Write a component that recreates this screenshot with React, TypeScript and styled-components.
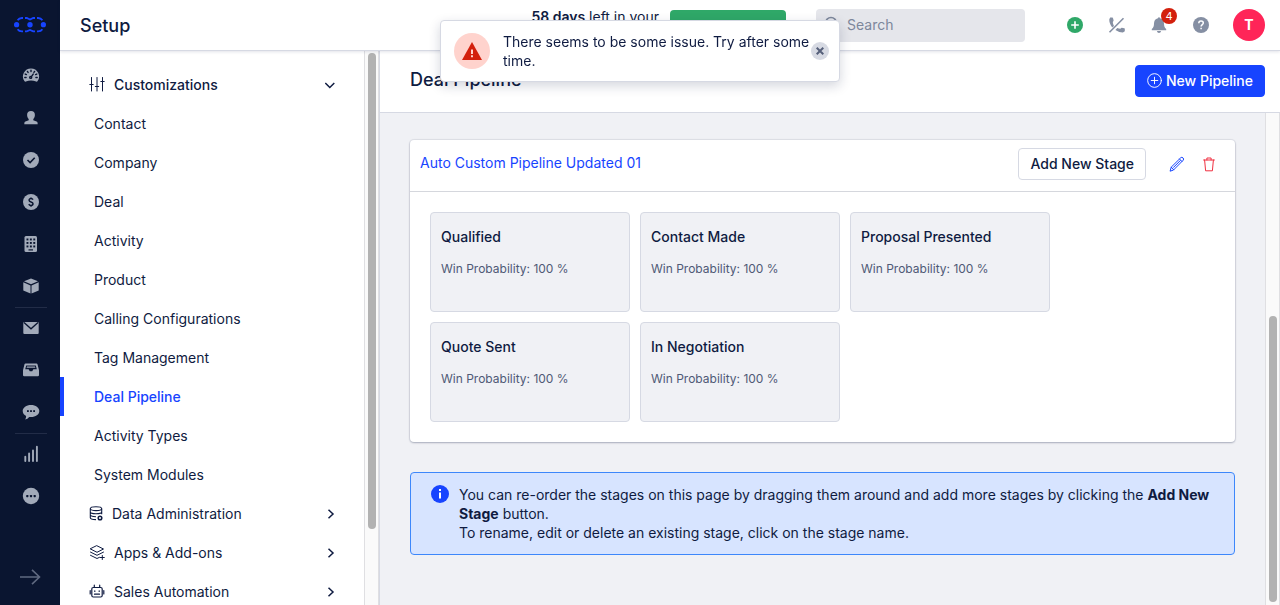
import React from "react";
import styled, { createGlobalStyle, css } from "styled-components";

const ink = "#0f1b41";
const blue = "#1744ff";
const line = "#d6d9e3";
const canvas = "#f0f1f5";

const GlobalStyle = createGlobalStyle`
  *, *::before, *::after { box-sizing: border-box; }
  body {
    margin: 0;
    background: #fff;
    color: ${ink};
    font-family: Inter, "Liberation Sans", sans-serif;
    font-size: 14px;
    line-height: 19px;
  }
  button, input { font: inherit; color: inherit; }
  button { cursor: pointer; padding: 0; border: 0; background: none; }
  a { color: inherit; text-decoration: none; }
  ul { list-style: none; margin: 0; padding: 0; }
  h1, h2, h3, p { margin: 0; }
  svg { display: block; flex: none; }
`;

const Shell = styled.div`
  display: flex;
  height: 100vh;
  overflow: hidden;
`;

const Rail = styled.nav`
  display: flex;
  flex-direction: column;
  flex: none;
  width: 60px;
  background: #0a1530;
  color: #a2aab9;
`;

const Brand = styled.a`
  display: flex;
  justify-content: center;
  padding: 16px 0 21px;
`;

const RailLink = styled.a<{ $divided?: boolean }>`
  display: flex;
  align-items: center;
  justify-content: center;
  height: 42px;
  margin: 0 13px 0 15px;
  padding-bottom: 1px;
  border-top: 1px solid ${(p) => (p.$divided ? "#222c47" : "transparent")};
`;

const RailToggle = styled.button`
  display: flex;
  justify-content: center;
  margin-top: auto;
  padding: 0 0 20px;
  color: #5f6980;
`;

const Page = styled.div`
  display: flex;
  flex-direction: column;
  flex: 1;
  min-width: 0;
`;

const TopBar = styled.header`
  position: relative;
  z-index: 1;
  display: flex;
  align-items: center;
  flex: none;
  height: 51px;
  padding: 0 15px 0 20px;
  background: #fff;
  border-bottom: 1px solid ${line};
  box-shadow: 0 1px 3px rgba(15, 27, 65, 0.12);
`;

const Title = styled.h1`
  flex: 1;
  padding-top: 2px;
  font-size: 18px;
  line-height: 24px;
  font-weight: 500;
`;

const Trial = styled.p`
  align-self: flex-start;
  padding-top: 7px;
  strong { font-weight: 600; }
`;

const UpgradeButton = styled.button`
  width: 116px;
  height: 30px;
  margin: 0 30px 0 11px;
  border-radius: 4px;
  background: #2fa868;
`;

const SearchBox = styled.label`
  display: flex;
  align-items: center;
  gap: 7px;
  width: 209px;
  height: 33px;
  margin-right: 29px;
  padding: 0 8px 2px;
  border-radius: 4px;
  background: #e5e6eb;
  color: #7d879b;
  input {
    flex: 1;
    min-width: 0;
    padding: 0;
    border: 0;
    outline: 0;
    background: none;
  }
  input::placeholder { color: #7d879b; opacity: 1; }
`;

const IconButton = styled.button<{ $tone: string; $width?: number }>`
  position: relative;
  display: flex;
  align-items: center;
  justify-content: center;
  width: ${(p) => p.$width ?? 42}px;
  height: 32px;
  color: ${(p) => p.$tone};
`;

const Badge = styled.span`
  position: absolute;
  top: -1px;
  right: 3px;
  width: 16px;
  height: 16px;
  border-radius: 50%;
  background: #d3200d;
  color: #fff;
  font-size: 11px;
  line-height: 16px;
  text-align: center;
`;

const Avatar = styled.button`
  width: 32px;
  height: 32px;
  margin-left: 11px;
  padding-bottom: 1px;
  border-radius: 50%;
  background: #ff2558;
  color: #fff;
  font-weight: 700;
`;

const Columns = styled.div`
  display: flex;
  flex: 1;
  min-height: 0;
`;

const SetupNav = styled.nav`
  flex: none;
  width: 304px;
  padding-top: 14px;
  overflow: hidden;
`;

const GroupButton = styled.button<{ $open?: boolean }>`
  display: flex;
  align-items: center;
  gap: 9px;
  width: 100%;
  height: 39px;
  padding: 0 27px 0 29px;
  text-align: left;
  font-weight: ${(p) => (p.$open ? 500 : 400)};
  span { flex: 1; }
`;

const NavLink = styled.a<{ $active?: boolean }>`
  display: block;
  height: 39px;
  padding-left: 30px;
  border-left: 4px solid transparent;
  line-height: 39px;
  ${(p) =>
    p.$active &&
    css`
      border-color: ${blue};
      color: ${blue};
      font-weight: 500;
    `}
`;

const Track = styled.div`
  display: flex;
  flex-direction: column;
  flex: none;
  width: 15px;
  padding: 2px 2px 2px 3px;
  border: solid #dfdfe2;
  border-width: 0 1px;
  background: #fafafa;
`;

const Thumb = styled.div<{ $before: number; $size: number; $after: number }>`
  display: flex;
  flex-direction: column;
  flex: 1;
  width: 8px;
  &::before { content: ""; flex: ${(p) => p.$before}; }
  &::after { content: ""; flex: ${(p) => p.$after}; }
  span {
    flex: ${(p) => p.$size};
    border-radius: 4px;
    background: #b2b2b2;
  }
`;

const Main = styled.main`
  display: flex;
  flex-direction: column;
  flex: 1;
  min-width: 0;
  border-left: 1px solid ${line};
`;

const MainHead = styled.div`
  display: flex;
  align-items: center;
  justify-content: space-between;
  height: 62px;
  padding: 0 15px 2px 30px;
  border-bottom: 1px solid ${line};
`;

const SectionTitle = styled.h2`
  padding-bottom: 2px;
  font-size: 18px;
  line-height: 24px;
  font-weight: 500;
`;

const Button = styled.button<{ $primary?: boolean }>`
  display: flex;
  align-items: center;
  justify-content: center;
  gap: 4px;
  height: 32px;
  padding: 0 11px;
  border: 1px solid ${(p) => (p.$primary ? blue : line)};
  border-radius: 4px;
  background: ${(p) => (p.$primary ? blue : "#fff")};
  color: ${(p) => (p.$primary ? "#fff" : ink)};
  font-weight: 500;
`;

const ScrollArea = styled.div`
  display: flex;
  flex: 1;
  min-height: 0;
  background: ${canvas};
`;

const Content = styled.div`
  flex: 1;
  min-width: 0;
  padding: 27px 30px 0;
  overflow: hidden;
`;

const Card = styled.section`
  border-radius: 4px;
  background: #fff;
  box-shadow: 0 0 1px 1px rgba(15, 27, 65, 0.08), 0 1px 2px rgba(15, 27, 65, 0.25);
`;

const CardHead = styled.div`
  display: flex;
  align-items: center;
  height: 52px;
  padding: 0 10px;
  border-bottom: 1px solid #d5d7dd;
`;

const PipelineName = styled.h3`
  flex: 1;
  padding-bottom: 6px;
  color: ${blue};
  font-size: 14px;
  font-weight: 400;
`;

const CardActions = styled.div`
  display: flex;
  align-items: center;
  padding-bottom: 3px;
  button:first-child {
    margin-right: 15px;
    padding-bottom: 2px;
  }
`;

const Stages = styled.ul`
  display: flex;
  flex-wrap: wrap;
  gap: 10px;
  padding: 20px;
`;

const Stage = styled.li`
  width: 200px;
  height: 100px;
  padding: 14px 10px;
  border: 1px solid ${line};
  border-radius: 4px;
  background: ${canvas};
`;

const StageName = styled.p`
  font-weight: 500;
`;

const StageMeta = styled.p`
  padding-top: 13px;
  color: #4f5975;
  font-size: 12px;
`;

const Note = styled.aside`
  display: flex;
  gap: 10px;
  margin-top: 30px;
  padding: 12px 20px;
  border: 1px solid #3d87fb;
  border-radius: 4px;
  background: #d7e4ff;
  p { flex: 1; }
`;

const Toast = styled.div`
  position: fixed;
  z-index: 2;
  top: 20px;
  left: 50%;
  display: flex;
  align-items: center;
  width: 400px;
  padding: 11px 10px 11px 13px;
  border: 1px solid ${line};
  border-radius: 4px;
  background: #fff;
  box-shadow: 0 4px 12px rgba(15, 27, 65, 0.18);
  transform: translateX(-50%);
  p { flex: 1; padding-left: 13px; }
`;

const ToastIcon = styled.span`
  display: flex;
  align-items: center;
  justify-content: center;
  width: 36px;
  height: 36px;
  border-radius: 50%;
  background: #ffd3cd;
`;

const CloseButton = styled.button`
  display: flex;
  align-items: center;
  justify-content: center;
  width: 18px;
  height: 18px;
  border-radius: 50%;
  background: #d7dae3;
  color: #56607a;
`;

const Solid = ({ children }: { children: React.ReactNode }) => (
  <svg width="18" height="18" viewBox="0 0 18 18" fill="currentColor" aria-hidden="true">{children}</svg>
);

const Outline = ({ children, size = 16, weight = 1 }: { children: React.ReactNode; size?: number; weight?: number }) => (
  <svg width={size} height={size} viewBox="0 0 16 16" fill="none" stroke="currentColor" strokeWidth={weight} strokeLinecap="round" strokeLinejoin="round" aria-hidden="true">{children}</svg>
);

const dark = "#0a1530";

const railItems: { label: string; divided?: boolean; icon: React.ReactNode }[] = [
  {
    label: "Dashboard",
    icon: (
      <Solid>
        <path d="M9 1.500a8 8 0 0 0-6.600 12.600q.6.9 1.500.5Q9 12.200 14.100 14.600q.9.4 1.500-.5A8 8 0 0 0 9 1.500z" />
        <g stroke={dark} strokeWidth="1.400" strokeLinecap="round" fill="none">
          <path d="M9 3.200v1.300M5.400 4.400l.7 1M12.600 4.400l-.7 1M3.200 7.100l1.200.5M14.800 7.100l-1.200.5M2.800 10.500h1.300M13.900 10.500h1.300M9.200 9.800l2-2.700" />
          <circle cx="8.700" cy="10.400" r="1" />
        </g>
      </Solid>
    ),
  },
  {
    label: "Contacts",
    icon: (
      <Solid>
        <path d="M9 2C6.500 2 5 3.600 5.100 6c.1 1.900.6 3 1.600 4.100v1.100L3.500 12.500C2.600 12.900 2.300 13.500 2.300 15.300h13.400c0-1.800-.3-2.400-1.200-2.800l-3.200-1.300v-1.100c1-1.100 1.500-2.200 1.600-4.100C13 3.600 11.500 2 9 2z" />
      </Solid>
    ),
  },
  {
    label: "Tasks",
    icon: (
      <Solid>
        <circle cx="9" cy="9" r="8" />
        <path d="M5.500 9l2.600 2.600 4.600-4.800" fill="none" stroke={dark} strokeWidth="1.600" />
      </Solid>
    ),
  },
  {
    label: "Deals",
    icon: (
      <Solid>
        <circle cx="9" cy="9" r="8" />
        <path d="M11 6.700C10.600 5.900 10 5.600 9 5.600c-1.200 0-1.900.6-1.900 1.600C7.100 9.500 11 8.400 11 10.800c0 1-.8 1.600-2 1.600-1.100 0-1.800-.4-2.200-1.300M9 4.400v1.200M9 12.400v1.300" fill="none" stroke={dark} strokeWidth="1.500" />
      </Solid>
    ),
  },
  {
    label: "Companies",
    icon: (
      <Solid>
        <rect x="2.500" y="1" width="12.500" height="16" rx="1.500" />
        <g fill={dark}>
          {[4, 7.5, 11].map((y) => [4.5, 7.9, 11.3].map((x) => <rect key={`${x}-${y}`} x={x} y={y - 0.5} width="1.900" height="1.900" />))}
          <rect x="6.500" y="14.300" width="4.500" height="1.200" />
        </g>
      </Solid>
    ),
  },
  {
    label: "Products",
    icon: (
      <Solid>
        <path d="M9 1.400l7 2.800L9 7.300 2 4.200z" />
        <path d="M1.300 5.300l7.200 3.200v7.900l-7.200-2.900zM16.700 5.300L9.500 8.500v7.900l7.200-2.900z" />
      </Solid>
    ),
  },
  {
    label: "Email",
    divided: true,
    icon: (
      <Solid>
        <rect x="1.300" y="3" width="15.400" height="12" rx="1" />
        <path d="M2 3.600l7 6.200 7-6.200" fill="none" stroke={dark} strokeWidth="1.300" />
      </Solid>
    ),
  },
  {
    label: "Inbox",
    icon: (
      <Solid>
        <path d="M3.500 2.500h11q.8 0 1 .8l1.500 6V14q0 1.200-1.200 1.200H2.200Q1 15.200 1 14V9.300l1.500-6q.2-.8 1-.8z" />
        <path d="M4.200 4.400h9.600l1 3.900h-3.400L10.200 10.300H7.800L6.600 8.300H3.200z" fill={dark} />
        <path d="M5 5.500h8l.4 1.300H4.600z" />
      </Solid>
    ),
  },
  {
    label: "Messages",
    icon: (
      <Solid>
        <path d="M9 2c4.700 0 8.300 2.600 8.300 6.100S13.700 14.100 9 14.100q-.9 0-1.800-.1Q5.600 16 3.200 16.600q1-1.600.9-3.500C2 12 .7 10.300.7 8.100.7 4.600 4.300 2 9 2z" />
        <g fill={dark}><rect x="5" y="7.200" width="1.800" height="1.800" /><rect x="8.100" y="7.200" width="1.800" height="1.800" /><rect x="11.200" y="7.200" width="1.800" height="1.800" /></g>
      </Solid>
    ),
  },
  {
    label: "Reports",
    divided: true,
    icon: (
      <Solid>
        <path d="M3.300 11.700V16M7.100 8.500V16M11 5.500V16M14.900 1.800V16" stroke="currentColor" strokeWidth="1.900" strokeLinecap="round" />
      </Solid>
    ),
  },
  {
    label: "More",
    icon: (
      <Solid>
        <circle cx="9" cy="9" r="8.200" />
        <g fill={dark}><rect x="4.200" y="8" width="2.200" height="2.200" rx=".6" /><rect x="7.900" y="8" width="2.200" height="2.200" rx=".6" /><rect x="11.600" y="8" width="2.200" height="2.200" rx=".6" /></g>
      </Solid>
    ),
  },
];

const customizations = [
  "Contact",
  "Company",
  "Deal",
  "Activity",
  "Product",
  "Calling Configurations",
  "Tag Management",
  "Deal Pipeline",
  "Activity Types",
  "System Modules",
];

const groups = [
  {
    label: "Data Administration",
    icon: (
      <svg width="14" height="16" viewBox="0 0 14 16" fill="none" stroke="currentColor" strokeWidth="1.100" aria-hidden="true">
        <ellipse cx="7" cy="2.700" rx="5.700" ry="1.900" />
        <path d="M1.300 2.700v9c0 1 2.300 1.800 5.700 1.900M12.700 2.700v5.500M1.300 5.700c0 1.200 2.500 2 5.700 2s5.700-.8 5.700-2M1.300 8.700c0 1.100 2.300 1.900 5.700 2" />
        <circle cx="11" cy="12" r="1.800" strokeWidth="1.500" />
      </svg>
    ),
  },
  {
    label: "Apps & Add-ons",
    icon: (
      <Outline>
        <path d="M8 .8l6.500 3.200L8 7.300 1.500 4zM1.500 7.100L8 10.300l6.500-3.200M1.500 10.300L8 13.500l2.500-1.200M13.300 10.500v4M11.300 12.500h4" />
      </Outline>
    ),
  },
  {
    label: "Sales Automation",
    icon: (
      <Outline weight={1.2}>
        <rect x="2.800" y="3.500" width="10.400" height="9.500" rx="1.500" />
        <path d="M5.300 3.500V1.200M10.700 3.500V1.200M1.200 6.500V10M14.800 6.500V10M5.800 6.800v.7M10.200 6.800v.7M5.500 10.200h5" />
      </Outline>
    ),
  },
];

const stages = ["Qualified", "Contact Made", "Proposal Presented", "Quote Sent", "In Negotiation"];

const Chevron = ({ down }: { down?: boolean }) => (
  <svg width="12" height="12" viewBox="0 0 12 12" fill="none" stroke="currentColor" strokeWidth="1.500" aria-hidden="true">
    <path d={down ? "M.3 4L4.800 8.500 9.300 4" : "M3.500 1.800L8 6l-4.500 4.200"} />
  </svg>
);

export default function App() {
  return (
    <Shell>
      <GlobalStyle />
      <Rail aria-label="Main">
        <Brand href="#" aria-label="Home">
          <svg width="32" height="18" viewBox="0 0 32 18" fill="none" stroke={blue} strokeWidth="1.800" aria-hidden="true">
            <path d="M3.600 4.200Q5 2 8 2H9M11 2h1.800L16 3.500 19.200 2H21M23 2h1Q27 2 28.400 4.200M3.600 13.200Q5 15.400 8 15.400H9M11 15.400h1.800L16 13.900l3.200 1.500H21M23 15.400h1q3 0 4.400-2.200" />
            <g fill={blue} stroke="none"><circle cx="2.600" cy="8.700" r="2.600" /><circle cx="16" cy="8.700" r="2.700" /><circle cx="29.400" cy="8.700" r="2.600" /></g>
          </svg>
        </Brand>
        {railItems.map((item) => (
          <RailLink key={item.label} href="#" aria-label={item.label} $divided={item.divided}>{item.icon}</RailLink>
        ))}
        <RailToggle aria-label="Expand menu">
          <svg width="22" height="16" viewBox="0 0 22 16" fill="none" stroke="currentColor" strokeWidth="1.600" aria-hidden="true">
            <path d="M1 8h19.500M13 .8L20.500 8 13 15.200" />
          </svg>
        </RailToggle>
      </Rail>

      <Page>
        <TopBar>
          <Title>Setup</Title>
          <Trial><strong>58 days</strong> left in your</Trial>
          <UpgradeButton aria-label="Upgrade" />
          <SearchBox>
            <Outline weight={1.5}><circle cx="7" cy="7" r="5.500" /><path d="M11 11l4 4" /></Outline>
            <input type="search" placeholder="Search" aria-label="Search" />
          </SearchBox>
          <IconButton $tone="#2fa868" aria-label="Add">
            <Solid><circle cx="9" cy="9" r="8" /><path d="M9 5.200v7.600M5.200 9h7.600" stroke="#fff" strokeWidth="1.600" /></Solid>
          </IconButton>
          <IconButton $tone="#858fa3" aria-label="Calls">
            <Solid>
              <path d="M2.200 1.500h2.400q.9 1.500 1 3.200L4.800 6q.1 2.100 1.200 4l-1.800 1.600Q1 7 1.300 3.200zM16.800 15.300v-2.700q-1.600-.9-3.200-.9L12.300 12.700q-1.500 0-3-.7l-1.900 1.900q4.200 2.600 7.500 2.500z" />
              <path d="M15.500 2.200L1.500 16.200" stroke="currentColor" strokeWidth="1.600" />
            </Solid>
          </IconButton>
          <IconButton $tone="#858fa3" aria-label="Notifications">
            <Solid>
              <path d="M9 1.200q.9 0 1.100 1C12.700 2.800 14 4.800 14 7.500c0 2.800.6 4.100 2.200 5.600v1.200H1.800v-1.200C3.400 11.600 4 10.300 4 7.500c0-2.700 1.300-4.700 3.900-5.300q.2-1 1.100-1zM6.900 14.900h4.200Q10.700 16.900 9 16.900t-2.100-2z" />
            </Solid>
            <Badge>4</Badge>
          </IconButton>
          <IconButton $tone="#858fa3" aria-label="Help">
            <Solid>
              <circle cx="9" cy="9" r="8" />
              <path d="M6.800 7.200C6.800 5.800 7.700 5 9 5s2.300.8 2.300 2c0 1.500-2.200 1.700-2.200 3.500M9.100 11.800v1.500" fill="none" stroke="#fff" strokeWidth="1.500" />
            </Solid>
          </IconButton>
          <Avatar aria-label="Account">T</Avatar>
        </TopBar>

        <Columns>
          <SetupNav aria-label="Setup">
            <GroupButton $open aria-expanded="true">
              <Outline><path d="M2.500 .5v13.500M.8 7.500h3.400M8 .5v13.500M6.300 9.500h3.400M13.500 .5v13.500M11.800 4.500h3.400" /></Outline>
              <span>Customizations</span>
              <Chevron down />
            </GroupButton>
            <ul>
              {customizations.map((name) => (
                <li key={name}><NavLink href="#" $active={name === "Deal Pipeline"}>{name}</NavLink></li>
              ))}
            </ul>
            {groups.map((group) => (
              <GroupButton key={group.label} aria-expanded="false">
                {group.icon}
                <span>{group.label}</span>
                <Chevron />
              </GroupButton>
            ))}
          </SetupNav>
          <Track><Thumb $before={0} $size={476} $after={74}><span /></Thumb></Track>

          <Main>
            <MainHead>
              <SectionTitle>Deal Pipeline</SectionTitle>
              <Button $primary>
                <Outline size={15}><circle cx="8" cy="8" r="7.300" /><path d="M8 4.500v7M4.500 8h7" /></Outline>
                New Pipeline
              </Button>
            </MainHead>
            <ScrollArea>
              <Content>
                <Card>
                  <CardHead>
                    <PipelineName>Auto Custom Pipeline Updated 01</PipelineName>
                    <CardActions>
                      <Button>Add New Stage</Button>
                      <IconButton $tone={blue} $width={32} aria-label="Edit pipeline">
                        <Outline><path d="M1.200 14.800l1-3.600L11.800 1.700q1-.9 2.200.2t.2 2.300L4.700 13.800zM10.500 3l2.500 2.500M2.200 11.200l2.500 2.600M4.500 11.400l6.800-6.800" /></Outline>
                      </IconButton>
                      <IconButton $tone="#f03040" $width={32} aria-label="Delete pipeline">
                        <Outline><path d="M2.600 4h10.800M5.900 4V2h4.200v2M3.600 4l1 10.800h6.800l1-10.800" /></Outline>
                      </IconButton>
                    </CardActions>
                  </CardHead>
                  <Stages>
                    {stages.map((name) => (
                      <Stage key={name}>
                        <StageName>{name}</StageName>
                        <StageMeta>Win Probability: 100 %</StageMeta>
                      </Stage>
                    ))}
                  </Stages>
                </Card>
                <Note>
                  <svg width="18" height="18" viewBox="0 0 18 18" aria-hidden="true">
                    <circle cx="9" cy="9" r="9" fill={blue} />
                    <path d="M9 4v2M9 7.500v6" stroke="#fff" strokeWidth="2" />
                  </svg>
                  <p>
                    You can re-order the stages on this page by dragging them around and add more stages by clicking the <b>Add New Stage</b> button.
                    <br />
                    To rename, edit or delete an existing stage, click on the stage name.
                  </p>
                </Note>
              </Content>
              <Track><Thumb $before={201} $size={286} $after={1}><span /></Thumb></Track>
            </ScrollArea>
          </Main>
        </Columns>
      </Page>

      <Toast role="alert">
        <ToastIcon>
          <svg width="20" height="18" viewBox="0 0 20 18" aria-hidden="true">
            <path d="M10 0l10 18H0z" fill="#d3200d" />
            <path d="M10 7.500v4.500M10 13.300v2" stroke="#ffd3cd" strokeWidth="2" />
          </svg>
        </ToastIcon>
        <p>There seems to be some issue. Try after some time.</p>
        <CloseButton aria-label="Close">
          <svg width="8" height="8" viewBox="0 0 8 8" stroke="currentColor" strokeWidth="2" aria-hidden="true"><path d="M.7.700l6.600 6.600M7.300.7L.7 7.300" /></svg>
        </CloseButton>
      </Toast>
    </Shell>
  );
}
